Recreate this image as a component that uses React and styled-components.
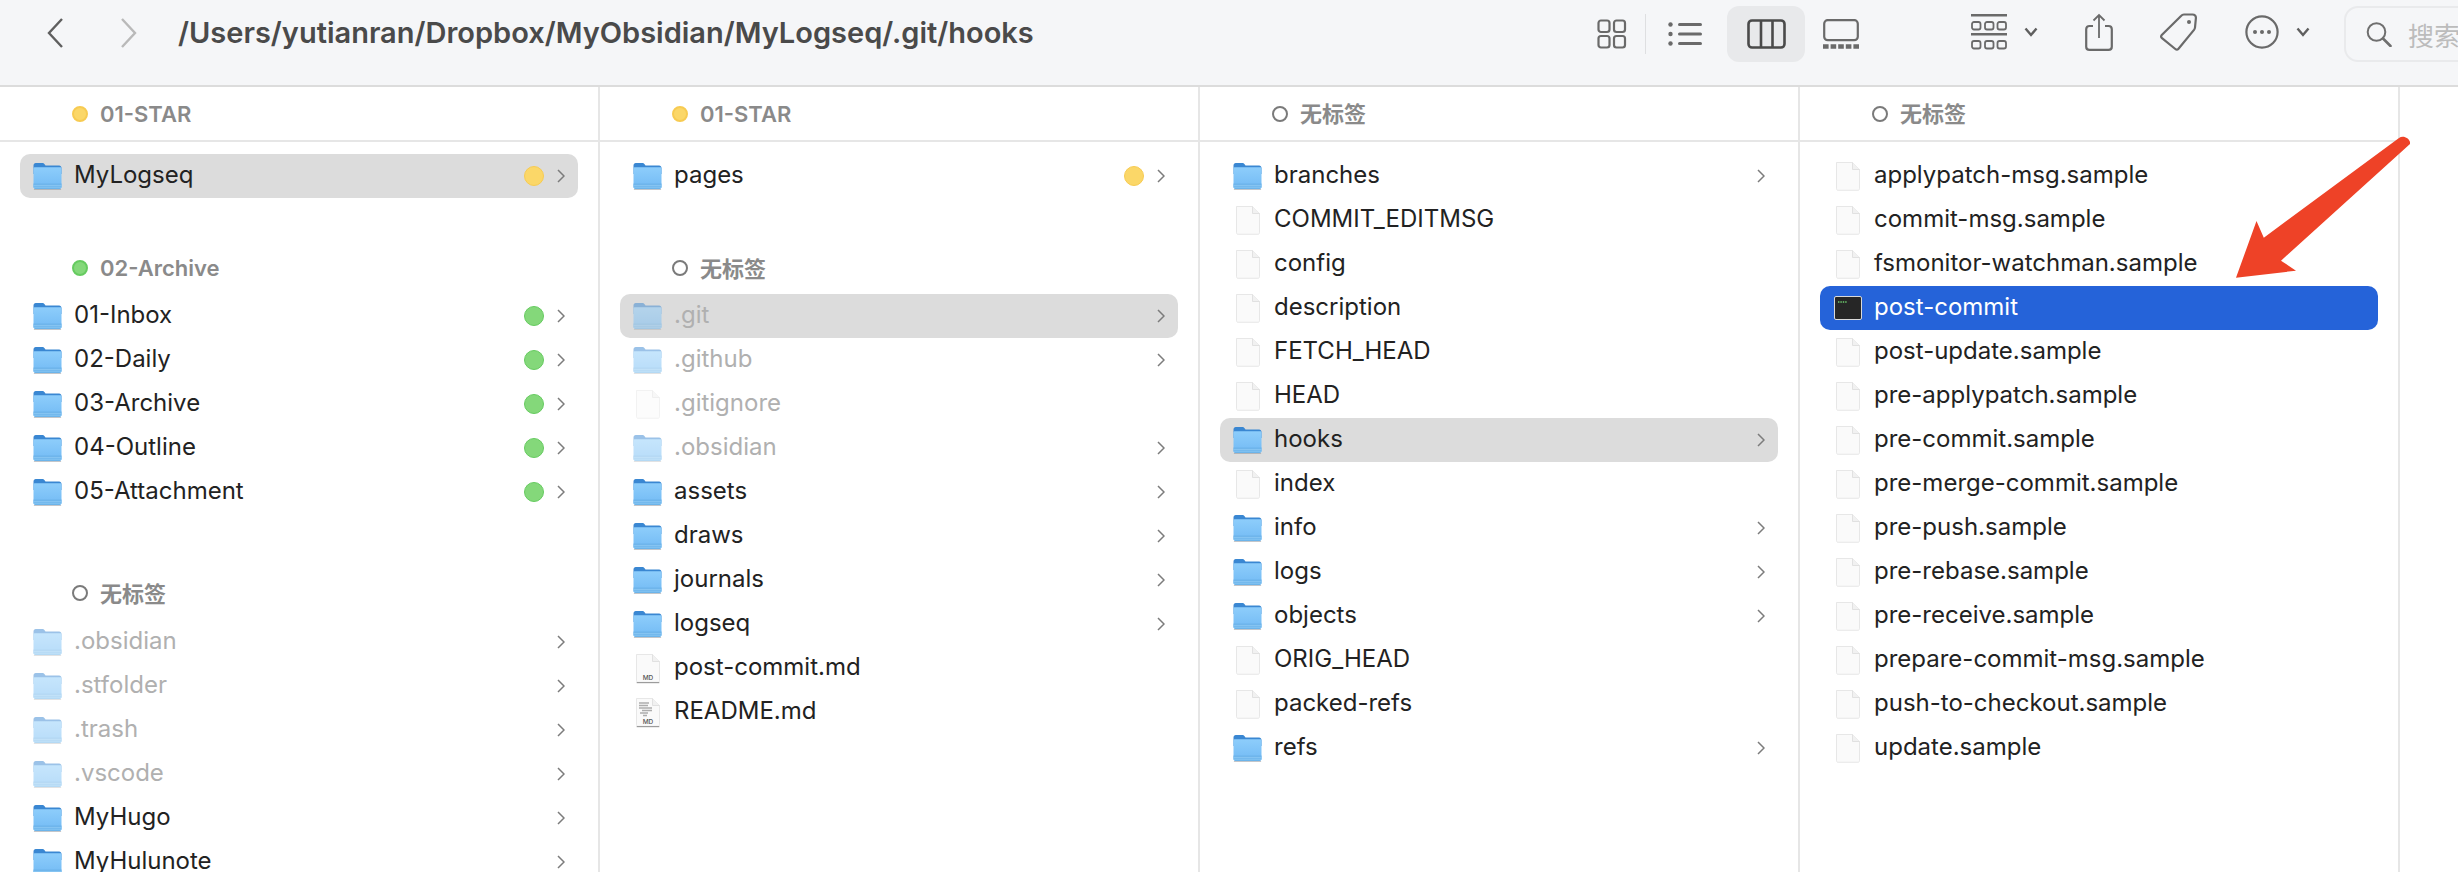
import React from 'react';
import styled, { createGlobalStyle } from 'styled-components';

const GlobalStyle = createGlobalStyle`
  html, body {
    margin: 0;
    background: #fff;
    overflow: hidden;
  }
  body {
    font-family: Inter, "Noto Sans CJK SC", sans-serif;
  }
`;

const FolderIcon = ({ dim }) => (
  <IconSvg $dim={dim} width="29" height="28" viewBox="0 0 28 28">
    <defs>
      <linearGradient id="folderFront" x1="0" y1="0" x2="0" y2="1">
        <stop offset="0" stopColor="#8dcdfb" />
        <stop offset="1" stopColor="#72baf4" />
      </linearGradient>
    </defs>
    <path d="M0 3.5C0 2 1 1 2.2 1h6.6c1 0 1.6.4 2.3 1.2L12 3.5h13.6C27 3.5 28 4.6 28 6v6H0z" fill="#3a87d2" />
    <path d="M0 6.6c0-.7.6-1.3 1.3-1.3h25.4c.7 0 1.3.6 1.3 1.3v18.2c0 1.3-1 2.2-2.2 2.2H2.2C1 27 0 26.1 0 24.8z" fill="url(#folderFront)" />
    <path d="M0 21.5h28v3.3c0 1.3-1 2.2-2.2 2.2H2.2C1 27 0 26.1 0 24.8z" fill="#6cb4ea" />
    <path d="M0 23.4h28M0 25.2h28" stroke="#9ad2f8" strokeWidth=".6" />
    <path d="M.4 27.6h27.2" stroke="#8b8f94" strokeWidth="1" opacity=".55" />
  </IconSvg>
);

const FileIcon = ({ dim, label, scribble }) => (
  <IconSvg $dim={dim} width="28" height="31" viewBox="0 0 28 31">
    <path d="M2.5 1.5h16l7 7v19.2c0 .9-.7 1.6-1.6 1.6H4.1c-.9 0-1.6-.7-1.6-1.6z" fill="#fafafa" stroke="#e1e1e1" strokeWidth=".8" />
    <path d="M18.5 1.5v7h7" fill="#f1f1f1" stroke="#dcdcdc" strokeWidth=".8" />
    {label && <path d="M2.7 29.6h22.6" stroke="#9c9c9c" strokeWidth="1.2" />}
    {scribble && (
      <path d="M5 6h10M5 8.5h9M5 11h13M8 13.5h10M6 16h8M9 18.5h4" stroke="#adadad" strokeWidth="1.5" />
    )}
    {label && (
      <text x="14" y="26.5" textAnchor="middle" fontSize="6.5" fontWeight="500" fill="#555" fontFamily="Inter, sans-serif">
        {label}
      </text>
    )}
  </IconSvg>
);

const ExecIcon = () => (
  <IconSvg width="28" height="24" viewBox="0 0 28 24">
    <rect x=".5" y=".5" width="27" height="23" rx="1.5" fill="#262626" stroke="#d9d9d9" />
    <path d="M4 6h1.4M6.4 6h1.4M8.8 6h1.4M11.2 6h1.4" stroke="#6fce6f" strokeWidth="1.6" />
  </IconSvg>
);

const Chevron = () => (
  <ChevronSvg width="8" height="14" viewBox="0 0 8 14">
    <path d="M1 1 7 7 1 13" fill="none" stroke="#7c7c7c" strokeWidth="1.5" />
  </ChevronSvg>
);

const ItemIcon = ({ kind, dim }) => {
  if (kind === 'folder') return <FolderIcon dim={dim} />;
  if (kind === 'exec') return <ExecIcon />;
  if (kind === 'md') return <FileIcon label="MD" />;
  if (kind === 'readme') return <FileIcon label="MD" scribble />;
  return <FileIcon dim={dim} />;
};

const Item = ({ name, kind = 'file', dim, sel, tag }) => (
  <Row $sel={sel}>
    <IconSlot>
      <ItemIcon kind={kind} dim={dim} />
    </IconSlot>
    <Name $dim={dim} $sel={sel}>{name}</Name>
    {tag && <TagDot $tag={tag} />}
    {kind === 'folder' && <Chevron />}
  </Row>
);

const Group = ({ tag, label, top, bottom }) => (
  <GroupLabel $top={top} $bottom={bottom}>
    <HeadDot $tag={tag} />
    <HeadText $cjk={!tag}>{label}</HeadText>
  </GroupLabel>
);

const f = (name, rest) => ({ name, kind: 'folder', ...rest });
const d = (name, rest) => ({ name, kind: 'file', ...rest });

const inboxRows = ['01-Inbox', '02-Daily', '03-Archive', '04-Outline', '05-Attachment'];

const hiddenRows = [
  f('.obsidian', { dim: true }),
  f('.stfolder', { dim: true }),
  f('.trash', { dim: true }),
  f('.vscode', { dim: true }),
  f('MyHugo'),
  f('MyHulunote')
];

const rootRows = [
  f('.git', { dim: true, sel: 'gray' }),
  f('.github', { dim: true }),
  d('.gitignore', { dim: true }),
  f('.obsidian', { dim: true }),
  f('assets'),
  f('draws'),
  f('journals'),
  f('logseq'),
  { name: 'post-commit.md', kind: 'md' },
  { name: 'README.md', kind: 'readme' }
];

const gitRows = [
  f('branches'),
  d('COMMIT_EDITMSG'),
  d('config'),
  d('description'),
  d('FETCH_HEAD'),
  d('HEAD'),
  f('hooks', { sel: 'gray' }),
  d('index'),
  f('info'),
  f('logs'),
  f('objects'),
  d('ORIG_HEAD'),
  d('packed-refs'),
  f('refs')
];

const hookRows = [
  d('applypatch-msg.sample'),
  d('commit-msg.sample'),
  d('fsmonitor-watchman.sample'),
  { name: 'post-commit', kind: 'exec', sel: 'blue' },
  d('post-update.sample'),
  d('pre-applypatch.sample'),
  d('pre-commit.sample'),
  d('pre-merge-commit.sample'),
  d('pre-push.sample'),
  d('pre-rebase.sample'),
  d('pre-receive.sample'),
  d('prepare-commit-msg.sample'),
  d('push-to-checkout.sample'),
  d('update.sample')
];

const Toolbar = () => (
  <Bar>
    <NavSvg width="18" height="32" viewBox="0 0 18 32">
      <path d="M16 2 3 16l13 14" fill="none" stroke="#5f5f5f" strokeWidth="2.4" />
    </NavSvg>
    <ForwardSvg width="18" height="32" viewBox="0 0 18 32">
      <path d="M2 2l13 14L2 30" fill="none" stroke="#b9b9b9" strokeWidth="2.4" />
    </ForwardSvg>
    <PathTitle>/Users/yutianran/Dropbox/MyObsidian/MyLogseq/.git/hooks</PathTitle>
    <ViewGroup>
      <ToolIcon width="30" height="30" viewBox="0 0 30 30">
        <g fill="none" stroke="#6a6a6a" strokeWidth="2.2">
          <rect x="1.5" y="1.5" width="11" height="11.5" rx="2.5" />
          <rect x="17" y="1.5" width="11" height="11.5" rx="2.5" />
          <rect x="1.5" y="17" width="11" height="11.5" rx="2.5" />
          <rect x="17" y="17" width="11" height="11.5" rx="2.5" />
        </g>
      </ToolIcon>
      <ViewDivider />
      <ToolIcon width="34" height="24" viewBox="0 0 34 24">
        <g fill="#6a6a6a">
          <circle cx="2.5" cy="2.5" r="2.2" />
          <circle cx="2.5" cy="12" r="2.2" />
          <circle cx="2.5" cy="21.5" r="2.2" />
          <rect x="10" y="1" width="24" height="3" rx="1.5" />
          <rect x="10" y="10.5" width="24" height="3" rx="1.5" />
          <rect x="10" y="20" width="24" height="3" rx="1.5" />
        </g>
      </ToolIcon>
      <ActiveView>
        <ToolIcon width="39" height="30" viewBox="0 0 39 30">
          <g fill="none" stroke="#4a4a4a" strokeWidth="2.6">
            <rect x="1.5" y="1.5" width="36" height="27" rx="3.5" />
            <path d="M14 1.5v27M25.5 1.5v27" />
          </g>
        </ToolIcon>
      </ActiveView>
      <ToolIcon width="36" height="30" viewBox="0 0 36 30">
        <rect x="1.2" y="1.2" width="33.6" height="20" rx="3.5" fill="none" stroke="#6a6a6a" strokeWidth="2.2" />
        <path d="M0 27.5h36" stroke="#6a6a6a" strokeWidth="4.5" strokeDasharray="5.6 2" />
      </ToolIcon>
    </ViewGroup>
    <ActionGroup>
      <IconWithCaret>
        <ToolIcon width="36" height="36" viewBox="0 0 36 36">
          <g fill="none" stroke="#6a6a6a" strokeWidth="1.8">
            <path d="M0 1.2h36M0 20.2h36" strokeWidth="2.4" />
            <rect x="1" y="8" width="8.5" height="7.5" rx="2" />
            <rect x="14" y="8" width="8.5" height="7.5" rx="2" />
            <rect x="26.5" y="8" width="8.5" height="7.5" rx="2" />
            <rect x="1" y="27" width="8.5" height="7.5" rx="2" />
            <rect x="14" y="27" width="8.5" height="7.5" rx="2" />
            <rect x="26.5" y="27" width="8.5" height="7.5" rx="2" />
          </g>
        </ToolIcon>
        <Caret />
      </IconWithCaret>
      <ToolIcon width="28" height="38" viewBox="0 0 28 38">
        <g fill="none" stroke="#6a6a6a" strokeWidth="2.2">
          <path d="M8 13H4.5C2.5 13 1.2 14.3 1.2 16.3v17.4c0 2 1.3 3.2 3.3 3.2h19c2 0 3.3-1.2 3.3-3.2V16.3c0-2-1.3-3.3-3.3-3.3H20" />
          <path d="M14 25V2M8.5 7.5 14 2l5.5 5.5" strokeWidth="1.8" />
        </g>
      </ToolIcon>
      <ToolIcon width="38" height="38" viewBox="0 0 38 38">
        <path d="M24 1.5h8.5c2.2 0 3.6 1.5 3.4 3.7l-.9 9.3c-.1.9-.4 1.6-1 2.4L18.5 35.8c-.9 1-2.3 1-3.2.2L2 25.2c-1-.9-1-2.3-.2-3.3L21 3c.9-1 1.8-1.5 3-1.5z" fill="none" stroke="#6a6a6a" strokeWidth="2.2" />
        <circle cx="29" cy="9" r="2" fill="#6a6a6a" />
      </ToolIcon>
      <IconWithCaret>
        <ToolIcon width="34" height="34" viewBox="0 0 34 34">
          <circle cx="17" cy="17" r="15.6" fill="none" stroke="#6a6a6a" strokeWidth="2.2" />
          <g fill="#6a6a6a">
            <circle cx="10" cy="17" r="2" />
            <circle cx="17" cy="17" r="2" />
            <circle cx="24" cy="17" r="2" />
          </g>
        </ToolIcon>
        <Caret />
      </IconWithCaret>
    </ActionGroup>
    <SearchBox>
      <ToolIcon width="26" height="25" viewBox="0 0 26 25">
        <circle cx="10.5" cy="10" r="8.8" fill="none" stroke="#6f6f6f" strokeWidth="2" />
        <path d="M17 16.5 24.5 24" stroke="#6f6f6f" strokeWidth="2.6" strokeLinecap="round" />
      </ToolIcon>
      <SearchText>搜索</SearchText>
    </SearchBox>
  </Bar>
);

const Caret = () => (
  <CaretSvg width="14" height="10" viewBox="0 0 14 10">
    <path d="M1.5 1.5 7 8l5.5-6.5" fill="none" stroke="#5f5f5f" strokeWidth="2.4" />
  </CaretSvg>
);

const RedArrow = () => (
  <ArrowOverlay width="190" height="150" viewBox="0 0 190 150">
    <path
      d="M3 147.7 23.5 91 30.8 107.7 166 8 C170 5 176 8 177 12 L177 14 48 130.7 63 140.7z"
      fill="#ee4227"
    />
  </ArrowOverlay>
);

const App = () => (
  <Window>
    <GlobalStyle />
    <Toolbar />
    <Columns>
      <Column>
        <ColumnHead>
          <HeadDot $tag="yellow" />
          <HeadText>01-STAR</HeadText>
        </ColumnHead>
        <List>
          <Item name="MyLogseq" kind="folder" sel="gray" tag="yellow" />
          <Group tag="green" label="02-Archive" top={50} bottom={6} />
          {inboxRows.map(name => (
            <Item key={name} name={name} kind="folder" tag="green" />
          ))}
          <Group label="无标签" top={59} bottom={7} />
          {hiddenRows.map(row => (
            <Item key={row.name} {...row} />
          ))}
        </List>
      </Column>
      <Column>
        <ColumnHead>
          <HeadDot $tag="yellow" />
          <HeadText>01-STAR</HeadText>
        </ColumnHead>
        <List>
          <Item name="pages" kind="folder" tag="yellow" />
          <Group label="无标签" top={50} bottom={6} />
          {rootRows.map(row => (
            <Item key={row.name} {...row} />
          ))}
        </List>
      </Column>
      <Column>
        <ColumnHead>
          <HeadDot />
          <HeadText $cjk>无标签</HeadText>
        </ColumnHead>
        <List>
          {gitRows.map(row => (
            <Item key={row.name} {...row} />
          ))}
        </List>
      </Column>
      <Column>
        <ColumnHead>
          <HeadDot />
          <HeadText $cjk>无标签</HeadText>
        </ColumnHead>
        <List>
          {hookRows.map(row => (
            <Item key={row.name} {...row} />
          ))}
        </List>
      </Column>
      <Rest />
    </Columns>
    <RedArrow />
  </Window>
);

export default App;

const tagColors = {
  yellow: { fill: '#fbd768', edge: '#f7cb52' },
  green: { fill: '#84d87a', edge: '#66cb60' }
};

const Window = styled.div`
  position: relative;
  width: 2458px;
  height: 872px;
  overflow: hidden;
  background: #fff;
`;

const Bar = styled.header`
  display: flex;
  align-items: flex-start;
  box-sizing: border-box;
  height: 87px;
  padding-left: 46px;
  background: #f5f6f8;
  border-bottom: 2px solid #dcdcdc;
`;

const NavSvg = styled.svg`
  flex: none;
  margin-top: 17px;
`;

const ForwardSvg = styled(NavSvg)`
  margin-left: 56px;
`;

const PathTitle = styled.div`
  flex: none;
  width: 860px;
  margin-left: 40px;
  line-height: 65px;
  font-size: 29px;
  font-weight: 600;
  color: #4a4a4a;
  white-space: nowrap;
`;

const ViewGroup = styled.div`
  display: flex;
  align-items: center;
  height: 56px;
  margin-top: 6px;
  margin-left: 559px;
`;

const ToolIcon = styled.svg`
  flex: none;
  display: block;
`;

const ViewDivider = styled.div`
  width: 1px;
  height: 40px;
  margin: 0 22px 0 18px;
  background: #dedfe1;
`;

const ActiveView = styled.div`
  display: flex;
  align-items: center;
  justify-content: center;
  width: 78px;
  height: 56px;
  margin: 0 18px 0 25px;
  border-radius: 12px;
  background: #e8e9eb;
`;

const ActionGroup = styled.div`
  display: flex;
  align-items: center;
  gap: 47px;
  height: 56px;
  margin-top: 4px;
  margin-left: 112px;
`;

const IconWithCaret = styled.div`
  display: flex;
  align-items: center;
  gap: 17px;
`;

const CaretSvg = styled.svg`
  flex: none;
`;

const SearchBox = styled.div`
  display: flex;
  align-items: center;
  gap: 16px;
  flex: none;
  box-sizing: border-box;
  width: 220px;
  height: 56px;
  margin-top: 6px;
  margin-left: 34px;
  padding-left: 20px;
  border: 2px solid #e9eaec;
  border-radius: 14px;
`;

const SearchText = styled.span`
  font-size: 26px;
  color: #bcbcbc;
`;

const Columns = styled.main`
  display: flex;
  height: 785px;
  overflow: hidden;
`;

const Column = styled.section`
  flex: none;
  box-sizing: border-box;
  width: 600px;
  border-right: 2px solid #e6e6e6;
`;

const Rest = styled.div`
  flex: 1;
`;

const ColumnHead = styled.div`
  display: flex;
  align-items: center;
  gap: 12px;
  box-sizing: border-box;
  height: 55px;
  padding-left: 72px;
  border-bottom: 2px solid #e6e6e6;
  font-size: 22px;
  font-weight: 600;
  color: #8a8a8a;
`;

const List = styled.div`
  padding-top: 12px;
`;

const GroupLabel = styled.div`
  display: flex;
  align-items: center;
  gap: 12px;
  height: 40px;
  margin-top: ${p => p.$top}px;
  margin-bottom: ${p => p.$bottom}px;
  padding-left: 72px;
  font-size: 22px;
  font-weight: 600;
  color: #8a8a8a;
`;

const HeadText = styled.span`
  margin-bottom: ${p => (p.$cjk ? 3 : 0)}px;
`;

const HeadDot = styled.span`
  flex: none;
  box-sizing: border-box;
  width: 16px;
  height: 16px;
  border-radius: 50%;
  background: ${p => (p.$tag ? tagColors[p.$tag].fill : 'transparent')};
  border: 2px solid ${p => (p.$tag ? tagColors[p.$tag].edge : '#7a7a7a')};
`;

const rowBackground = { gray: '#dcdcdc', blue: '#2563d9' };

const Row = styled.div`
  display: flex;
  align-items: center;
  box-sizing: border-box;
  height: 44px;
  margin: 0 20px;
  padding: 0 13px;
  border-radius: 10px;
  background: ${p => rowBackground[p.$sel] || 'transparent'};
`;

const IconSlot = styled.div`
  display: flex;
  align-items: center;
  justify-content: center;
  flex: none;
  width: 29px;
  height: 44px;
  margin-right: 12px;
`;

const IconSvg = styled.svg`
  display: block;
  opacity: ${p => (p.$dim ? 0.5 : 1)};
`;

const Name = styled.span`
  flex: 1;
  margin-bottom: 3px;
  font-size: 24px;
  white-space: nowrap;
  color: ${p => (p.$sel === 'blue' ? '#fff' : p.$dim ? '#b0b0b0' : '#222')};
`;

const TagDot = styled.span`
  flex: none;
  box-sizing: border-box;
  width: 20px;
  height: 20px;
  margin-right: 13px;
  margin-bottom: 1px;
  border-radius: 50%;
  background: ${p => tagColors[p.$tag].fill};
  border: 1.5px solid ${p => tagColors[p.$tag].edge};
`;

const ChevronSvg = styled.svg`
  flex: none;
  margin-bottom: 1px;
`;

const ArrowOverlay = styled.svg`
  position: absolute;
  top: 130px;
  left: 2233px;
`;
